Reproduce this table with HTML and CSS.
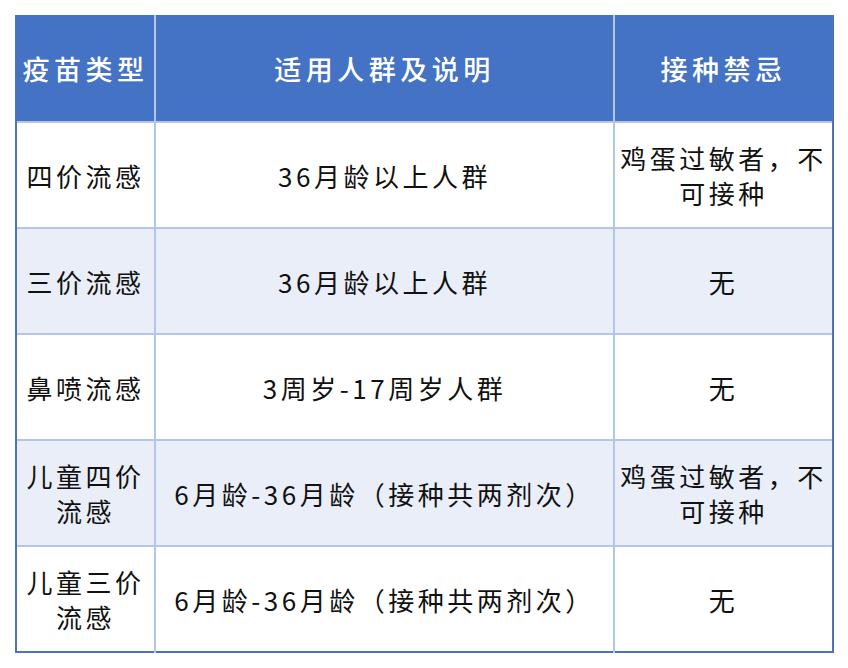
FILE: index.html
```html
<!DOCTYPE html>
<html lang="zh">
<head>
<meta charset="utf-8">
<link rel="stylesheet" href="styles.css">
</head>
<body>
<div class="page">
<table class="vax">
  <colgroup><col class="c1"><col class="c2"><col class="c3"></colgroup>
  <thead>
    <tr><th>疫苗类型</th><th>适用人群及说明</th><th>接种禁忌</th></tr>
  </thead>
  <tbody>
    <tr><td>四价流感</td><td>36月龄以上人群</td><td>鸡蛋过敏者，不可接种</td></tr>
    <tr class="alt"><td>三价流感</td><td>36月龄以上人群</td><td>无</td></tr>
    <tr><td>鼻喷流感</td><td>3周岁-17周岁人群</td><td>无</td></tr>
    <tr class="alt"><td>儿童四价流感</td><td>6月龄-36月龄（接种共两剂次）</td><td>鸡蛋过敏者，不可接种</td></tr>
    <tr><td>儿童三价流感</td><td>6月龄-36月龄（接种共两剂次）</td><td>无</td></tr>
  </tbody>
</table>
</div>
</body>
</html>
```
FILE: styles.css
```css
html, body { margin: 0; padding: 0; background: #ffffff; }
.page { padding: 15px 0 0 15px; }
.vax {
  border-collapse: collapse;
  table-layout: fixed;
  width: 817px;
  font-family: "Noto Sans CJK SC", "Noto Sans", sans-serif;
  border: 2px solid #4d72b8;
  border-top: none;
}
.c1 { width: 139px; }
.c2 { width: 459px; }
.c3 { width: 219px; }
.vax th, .vax td {
  border-left: 2px solid #b4c6e7;
  border-right: 2px solid #b4c6e7;
  text-align: center;
  vertical-align: middle;
  padding: 0 2px;
  line-height: 35px;
}
.vax th:first-child, .vax td:first-child { border-left: 2px solid #4d72b8; }
.vax th:last-child, .vax td:last-child { border-right: 2px solid #4d72b8; }
.vax th {
  background: #4472c4;
  color: #ffffff;
  font-weight: 500;
  font-size: 27px;
  letter-spacing: 4.5px;
  height: 106px;
}
.vax td {
  color: #111111;
  font-size: 26px;
  letter-spacing: 3.5px;
  height: 104px;
  border-top: 2px solid #b4c6e7;
}
.vax tr.alt td { background: #e9eef8; }
```
